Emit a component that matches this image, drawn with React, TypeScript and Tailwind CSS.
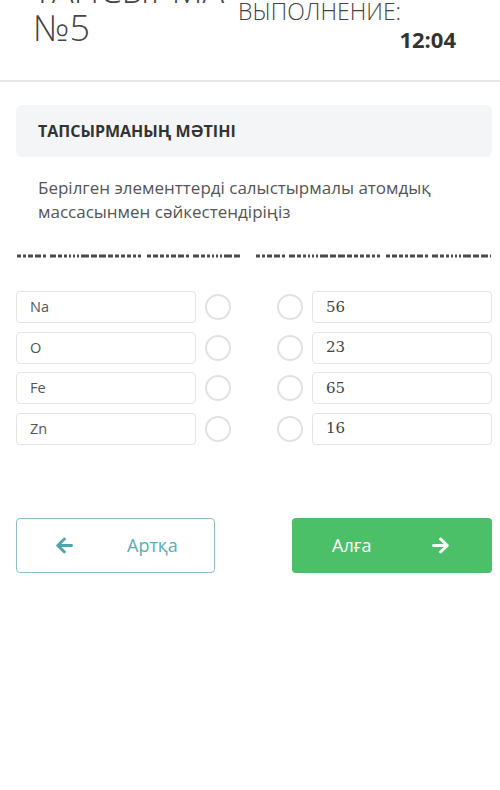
import React from "react";
import { FaArrowLeft, FaArrowRight } from "react-icons/fa";

const font = { fontFamily: '"Open Sans", "Noto Sans", sans-serif' };

function Dashes({ width }: { width: number }) {
  return (
    <svg width={width} height="4" className="block">
      <line
        x1="0"
        y1="2"
        x2={width}
        y2="2"
        stroke="#4a4a4a"
        strokeWidth="3"
        strokeDasharray="4 2 3 2 5 2 6 2 3 4 6 2 4 2 3 2 2 2 2 2 2 2 8 2 6 2 7 2 5 2 4 2 4 2 4 2 3 2 3 6 4 2 5 2"
      />
    </svg>
  );
}

function Circle() {
  return <div className="w-[26px] h-[26px] rounded-full border-2 border-[#e2e2e2] bg-white" />;
}

export default function App() {
  const left = ["Na", "O", "Fe", "Zn"];
  const right = ["56", "23", "65", "16"];
  return (
    <div className="w-[500px] h-[790px] bg-white overflow-hidden text-[#444]" style={font}>
      <div className="h-[82px] border-b-2 border-[#e6e6e6] flex overflow-hidden">
        <div className="pl-[33px] w-[238px] shrink-0 -mt-[29px] text-[36px] leading-[38px] font-light text-[#444] whitespace-nowrap">
          <div>ТАПСЫРМА</div>
          <div>№5</div>
        </div>
        <div className="w-[218px] shrink-0 -mt-[28px] flex flex-col">
          <div className="text-[23px] leading-[26px] font-light text-[#444] whitespace-nowrap">
            <div>ВРЕМЯ НА</div>
            <div>ВЫПОЛНЕНИЕ:</div>
          </div>
          <div className="text-right text-[22px] font-bold leading-[28px] mt-[1px] text-[#333]">12:04</div>
        </div>
      </div>

      <div className="pl-[16px] pr-[8px] pt-[23px]">
        <div className="h-[52px] rounded-[6px] bg-[#f4f5f7] flex items-center pl-[22px] text-[16px] font-bold text-[#333]">
          ТАПСЫРМАНЫҢ МӘТІНІ
        </div>
        <div className="pl-[22px] pt-[19px] text-[17px] leading-[24px] text-[#555]">
          Берілген элементтерді салыстырмалы атомдық массасынмен сәйкестендіріңіз
        </div>
        <div className="flex justify-between pt-[30px] pl-[1px] pr-[1px]">
          <Dashes width={224} />
          <Dashes width={235} />
        </div>
        <div className="pt-[33px] flex flex-col gap-[8.5px]">
          {left.map((l, i) => (
            <div key={l} className="flex items-center h-[32px]">
              <div className="w-[180px] shrink-0 h-[32px] rounded-[4px] border border-[#e4e4e4] flex items-center pl-[13px] text-[14.5px] text-[#555]">
                {l}
              </div>
              <div className="ml-[9px] shrink-0">
                <Circle />
              </div>
              <div className="ml-[46px] shrink-0">
                <Circle />
              </div>
              <div
                className="ml-[9px] w-[180px] shrink-0 h-[32px] rounded-[4px] border border-[#e4e4e4] flex items-center pl-[13px] text-[15px] text-[#444]"
                style={{ fontFamily: '"DejaVu Serif", "Liberation Serif", serif' }}
              >
                {right[i]}
              </div>
            </div>
          ))}
        </div>
        <div className="pt-[73px] flex justify-between">
          <div className="w-[199px] h-[55px] rounded-[4px] border border-[#8fbcc2] flex items-center text-[#5aaeb3]">
            <FaArrowLeft className="ml-[38px] text-[19px] text-[#4ba7a9]" />
            <span className="ml-[53px] text-[18px]">Артқа</span>
          </div>
          <div className="w-[200px] h-[55px] rounded-[4px] bg-[#4cbf69] flex items-center text-white">
            <span className="ml-[40px] text-[18px]">Алға</span>
            <FaArrowRight className="ml-[60px] text-[19px]" />
          </div>
        </div>
      </div>
    </div>
  );
}
